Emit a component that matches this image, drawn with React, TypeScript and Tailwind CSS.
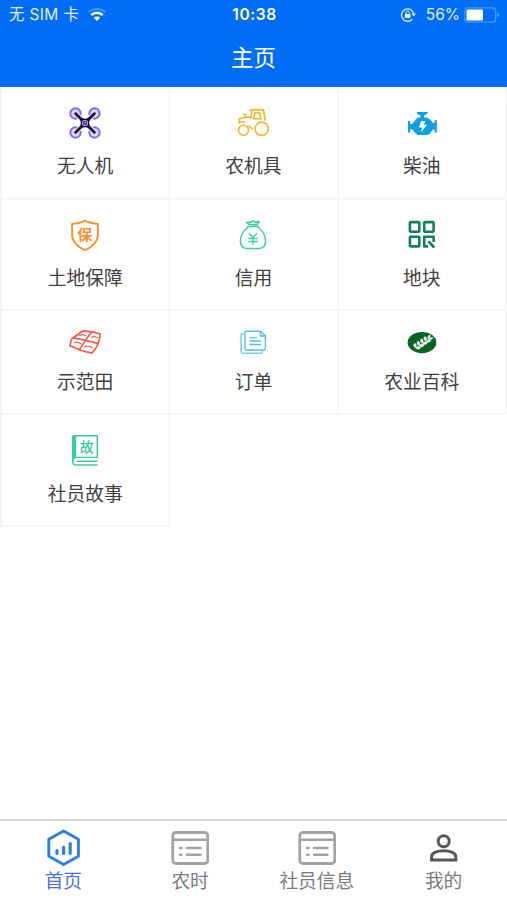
import React from 'react';

interface MenuItem {
  label: string;
  icon: React.ReactNode;
}

const glyphFont = '"Noto Sans CJK SC", sans-serif';

/* STATUS BAR ICONS */

const WifiIcon = () => (
  <svg width="18" height="14" viewBox="0 0 18 14" fill="none">
    <path d="M.8 4.2C5.5-.2 12.500-.2 17.200 4.200" stroke="#4f9bff" strokeWidth="1.800" />
    <path d="M3.300 7.100C6.500 4 11.500 4 14.700 7.100" stroke="#fff" strokeWidth="2.500" />
    <path d="M5.800 9.700C7.700 8.200 10.300 8.200 12.200 9.700L9 12.900Z" fill="#fff" />
  </svg>
);

const LockIcon = () => (
  <svg width="16" height="16" viewBox="0 0 16 16" fill="none">
    <path d="M12.300 12.200A6.200 6.200 0 1 1 13.600 6.300" stroke="#e3efff" strokeWidth="1.300" />
    <path d="M11.500 6.500H16L13.700 9.600Z" fill="#e3efff" />
    <rect x="4.800" y="7" width="5.600" height="4" rx=".5" fill="#e3efff" />
    <path d="M5.900 7.200V5.900a1.700 1.700 0 0 1 3.400 0v1.300" stroke="#e3efff" strokeWidth="1" />
  </svg>
);

const BatteryIcon = () => (
  <svg width="36" height="16" viewBox="0 0 36 16" fill="none">
    <rect x=".8" y=".8" width="30.800" height="14.400" rx="3" stroke="#4a99ff" strokeWidth="1.200" />
    <rect x="2.500" y="2.500" width="16.500" height="11" rx="1.200" fill="#fff" />
    <path d="M33.200 5.500c2.400.8 2.400 4.200 0 5Z" fill="#5aa2ff" />
  </svg>
);

/* MENU ICONS */

const DroneIcon = () => (
  <svg width="32" height="32" viewBox="0 0 32 32" fill="none">
    {[[6.5, 6.5], [25.5, 6.5], [6.5, 25.5], [25.5, 25.5]].map(([x, y]) => (
      <circle key={`${x}-${y}`} cx={x} cy={y} r="5.200" fill="#dfd8fb" stroke="#8765f0" strokeWidth="1.900" />
    ))}
    <path d="M9 9 23 23M23 9 9 23" stroke="#e9e4ff" strokeWidth="5" />
    <path d="M6.500 6.500 25.500 25.500M25.500 6.500 6.500 25.500" stroke="#15101f" strokeWidth="2.500" strokeLinecap="round" />
    <path d="M11 10.300Q16 13 21 10.300Q19.300 16 21 21.700Q16 19 11 21.700Q12.700 16 11 10.300Z" fill="#15101f" />
    <rect x="13.500" y="13.500" width="5" height="5" rx="1" fill="#6550ac" stroke="#a590f2" strokeWidth="1" />
  </svg>
);

const TractorIcon = () => (
  <svg width="32" height="32" viewBox="0 0 32 32" fill="none" stroke="#f3b529" strokeWidth="1.600" strokeLinejoin="round">
    <circle cx="6.500" cy="23.200" r="5" />
    <circle cx="24.700" cy="21.700" r="6.600" />
    <path d="M12.700 2.900H27.200M14.500 3V9.500L12.800 11.800M26.500 3 28.200 13.600" />
    <path d="M18 5.800H22.500L24 11.800H16.500Z" />
    <path d="M2.300 17V11.800L8 10.300H13M8.600 10.500V7.500M5.700 7.500H8.600M11.500 18.500 15.500 22.500M3 15H8" />
  </svg>
);

const EngineIcon = () => (
  <svg width="32" height="32" viewBox="0 0 32 32">
    <g fill="#0ea0e6">
      <path d="M11 5H21.500V6.800L18 8.500V11H14.500V8.500L11 6.800Z" />
      <path d="M10 12 12.500 10.500H21L24.500 12.800 27 16H28.500V13.500L30.800 13V25.800L28.500 25.200V22.500H27L24 26.500 21.500 28H12L9 26 6.500 22.500H4V25.500H2V14H4V17H6.500Z" />
    </g>
    <path d="M15.300 14H19.300L18 17.700H21L15 25.500 16.200 20.500H13Z" fill="#fff" />
  </svg>
);

const ShieldIcon = () => (
  <svg width="32" height="32" viewBox="0 0 32 32">
    <path d="M16 1.600C19.300 3.500 24.400 4.600 28.900 4.900V15.500C28.900 22.500 23 28.300 16 31.200C9 28.300 3.100 22.500 3.100 15.500V4.900C7.600 4.600 12.700 3.500 16 1.600Z" fill="none" stroke="#fa902c" strokeWidth="1.900" strokeLinejoin="round" />
    <text x="15.800" y="21.300" textAnchor="middle" fontSize="15" fontWeight="700" fontFamily={glyphFont} fill="#fa902c">保</text>
  </svg>
);

const MoneyBagIcon = () => (
  <svg width="32" height="32" viewBox="0 0 32 32" fill="none" stroke="#3dd09c" strokeWidth="1.500" strokeLinecap="round" strokeLinejoin="round">
    <path d="M11 8C6.300 12 3.400 16.800 3.400 21.700C3.400 27 6.300 29.600 11 29.600H21C25.700 29.600 28.600 27 28.600 21.700C28.600 16.800 25.700 12 21 8" />
    <path d="M10.800 7.500H21.200M11.500 5.200 9.500 3.200 13.200 3.500 16 1.800 18.800 3.500 22 2.300 20.300 5.700 11.500 5.200" />
    <path d="M12.300 14.500 16 18.500 19.700 14.500M16 18.500V25.300M11.800 19.500H20.200M11.800 22.500H20.200" strokeWidth="1.300" />
  </svg>
);

const PlotIcon = () => (
  <svg width="32" height="32" viewBox="0 0 32 32" fill="none" stroke="#12805c" strokeWidth="2.600" strokeLinejoin="round">
    <rect x="3.900" y="3.100" width="9.400" height="9.600" rx=".8" />
    <rect x="18.200" y="3.100" width="9.400" height="9.600" rx=".8" />
    <rect x="3.900" y="17.800" width="9.400" height="9.600" rx=".8" />
    <path d="M22 27.400H18.200V17.800H27.600V23M22.500 22.500 28.300 28.500" />
  </svg>
);

const FieldIcon = () => (
  <svg width="32" height="24" viewBox="0 0 32 24" fill="none" stroke="#f1584e" strokeWidth="1.700" strokeLinejoin="round" strokeLinecap="round">
    <path d="M13.500 1.200C19 .9 26 1.900 31.200 4C30.800 10.500 28 18 22.800 23.200C15.500 21.800 8 19.200 1.200 15.700C1 13 1.800 10.500 3.200 8.500Z" />
    <path d="M22.500 2.200C18.500 7 14.500 13.500 10.500 19.500M4.500 7.800C13 9.200 20.500 11.200 28.800 13.500" />
    <path d="M10.500 5.500 13.500 4.500 17 5.700M22.500 7.500 25 6.300 28.500 7.800M5.500 12.700 8.500 12 12 13.700M15.500 16.800 19 16 23.500 17.800" strokeWidth="1.200" />
  </svg>
);

const OrderIcon = () => (
  <svg width="32" height="24" viewBox="0 0 32 24" fill="none" stroke="#59bce5" strokeWidth="1.400" strokeLinejoin="round">
    <path d="M9.500 1.200H23.500L28.400 6V18.500Q28.400 20 27 20H9.500Q8 20 8 18.500V2.700Q8 1.200 9.500 1.200ZM23.500 1.200V6H28.400" />
    <path d="M8 4H4.200V21.800Q4.200 23.200 5.600 23.200H24Q25.400 23.200 25.400 21.500V20.500" stroke="#7dcdec" strokeWidth="1.600" />
    <path d="M12.500 7.600H20M12.500 11H24M12.500 14.500H24" />
  </svg>
);

const WheatIcon = () => (
  <svg width="32" height="24" viewBox="0 0 32 24">
    <ellipse cx="16" cy="12.600" rx="14.400" ry="10.600" fill="#086324" />
    <g fill="#f0f6ee" stroke="#f0f6ee" strokeWidth=".4">
      {[[9.500, 17.800], [12.900, 15.500], [16.300, 13.200], [19.700, 10.900]].map(([x, y]) => (
        <g key={x} transform={`translate(${x} ${y})`}>
          <path d="M0 0C-2.400-1.200-2.200-3.500-.8-4.500C1.200-3.600 1.700-1.700 0 0Z" />
          <path d="M.3.500C2.600 2.200 4.800 1.300 5.200-.6C3.500-2 1.400-1.500.3.500Z" />
        </g>
      ))}
      <path d="M22 9C21.200 6.900 22.300 5.300 24 4.700C24.600 6.500 23.800 8.300 22 9ZM23 9.300C24.500 10.200 26.300 9.300 27 7.700C25.400 6.900 23.700 7.500 23 9.300Z" />
    </g>
  </svg>
);

const BookIcon = () => (
  <svg width="32" height="32" viewBox="0 0 32 32">
    <g fill="none" stroke="#3ccb98" strokeWidth="1.400">
      <path d="M28.300 23.800V1.700H5.500C4.200 1.700 3.700 2.500 3.700 3.500V27.200C3.700 29.800 5 31 7.500 31H28.500" />
      <path d="M28.900 23.400H7.500C5.200 23.400 3.900 24.800 3.800 27.200M8 27.200H28.500" />
    </g>
    <path d="M3 3.500Q3 1.500 5 1.500H7.200V23.500L3 26Z" fill="#3ccb98" />
    <text x="17.700" y="18" textAnchor="middle" fontSize="14" fontWeight="500" fontFamily={glyphFont} fill="#3ccb98">故</text>
  </svg>
);

/* TAB ICONS */

const HomeIcon = () => (
  <svg width="38" height="38" viewBox="0 0 38 38" fill="none" stroke="#2b80dc">
    <path d="M19.600 2 34.400 10.300V27.300L19.600 35.600 4.800 27.300V10.300Z" strokeWidth="2.900" strokeLinejoin="round" />
    <path d="M13 21.500V24.500M19.600 18V24.500M26.200 14.500V24.500" strokeWidth="3.100" strokeLinecap="round" />
  </svg>
);

const ListIcon = () => (
  <svg width="38" height="38" viewBox="0 0 38 38" fill="none" stroke="#a3a3a3" strokeWidth="2.800">
    <rect x="1.750" y="3.500" width="35" height="31" rx="3" />
    <path d="M1.500 10.800H37" strokeWidth="2.400" />
    <path d="M9 19H10.500M16 19H29.500M9 25.700H10.500M16 25.700H29.500" strokeLinecap="round" strokeWidth="2.500" />
  </svg>
);

const UserIcon = () => (
  <svg width="38" height="38" viewBox="0 0 38 38" fill="none" stroke="#585858" strokeWidth="3">
    <circle cx="18.700" cy="12.300" r="5.500" />
    <path d="M6.600 30.900V27.700C6.600 19.700 30.800 19.700 30.800 27.700V30.900Z" />
  </svg>
);

const menuItems: MenuItem[] = [
  { label: '无人机', icon: <DroneIcon /> },
  { label: '农机具', icon: <TractorIcon /> },
  { label: '柴油', icon: <EngineIcon /> },
  { label: '土地保障', icon: <ShieldIcon /> },
  { label: '信用', icon: <MoneyBagIcon /> },
  { label: '地块', icon: <PlotIcon /> },
  { label: '示范田', icon: <FieldIcon /> },
  { label: '订单', icon: <OrderIcon /> },
  { label: '农业百科', icon: <WheatIcon /> },
  { label: '社员故事', icon: <BookIcon /> },
];

const tabs = [
  { label: '首页', icon: <HomeIcon />, active: true },
  { label: '农时', icon: <ListIcon /> },
  { label: '社员信息', icon: <ListIcon /> },
  { label: '我的', icon: <UserIcon /> },
];

export default function App() {
  return (
    <div className="flex h-screen w-full flex-col overflow-hidden bg-white font-[Inter,'Noto_Sans_CJK_SC',sans-serif]">
      <header className="h-[87px] shrink-0 bg-[#006df7] text-white">
        <div className="grid h-[30px] grid-cols-3 items-center pl-[9px] pr-[7px] text-[15.5px] leading-none text-[#e3efff]">
          <div className="flex items-center gap-[9px]">
            <span className="tracking-[0.3px]">无 SIM 卡</span>
            <WifiIcon />
          </div>
          <span className="text-center font-semibold tracking-[0.6px] text-white">10:38</span>
          <div className="flex items-center justify-end">
            <LockIcon />
            <span className="ml-[10px] mr-[4px]">56%</span>
            <BatteryIcon />
          </div>
        </div>
        <h1 className="flex h-[53px] items-center justify-center font-['Noto_Sans_CJK_SC',sans-serif] text-[22.5px] leading-none">主页</h1>
      </header>

      <main className="grid grid-cols-3 grid-rows-[113px_111px_104px_112px] border-l-2 border-[#f2f3f4] font-['Noto_Sans_CJK_SC',sans-serif]">
        {menuItems.map((item, i) => (
          <div key={item.label} className={`flex flex-col items-center border-b-2 border-r-2 border-[#f5f6f7] ${i < 3 ? 'pt-[20px]' : 'pt-[19px]'}`}>
            {item.icon}
            <span className={`text-[18.75px] leading-[26px] text-[#414141] ${i < 6 ? 'mt-[13px]' : 'mt-[14px]'}`}>{item.label}</span>
          </div>
        ))}
      </main>

      <nav className="mt-auto grid h-[81px] shrink-0 grid-cols-4 border-t-2 border-[#d5d5d5] pt-[8px] font-['Noto_Sans_CJK_SC',sans-serif]">
        {tabs.map(tab => (
          <div key={tab.label} className="flex flex-col items-center">
            {tab.icon}
            <span className={`text-[18.75px] leading-[26px] ${tab.active ? 'text-[#4b72dc]' : 'text-[#7c7c7c]'}`}>{tab.label}</span>
          </div>
        ))}
      </nav>
    </div>
  );
}
